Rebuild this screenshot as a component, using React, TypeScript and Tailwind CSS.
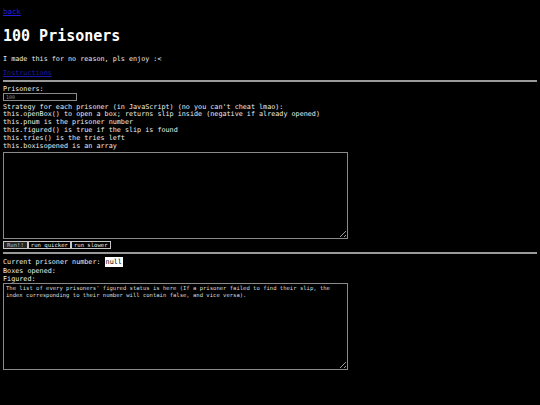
import { useState } from "react";

const strategyLines = [
  "Strategy for each prisoner (in JavaScript) (no you can't cheat lmao):",
  "this.openBox() to open a box; returns slip inside (negative if already opened)",
  "this.pnum is the prisoner number",
  "this.figured() is true if the slip is found",
  "this.tries() is the tries left",
  "this.boxisopened is an array",
];

const App = () => {
  const [code, setCode] = useState("");

  return (
    <div className="min-h-screen bg-black text-[#eeeeee] font-['DejaVu_Sans_Mono',monospace] px-[3px] pt-[8px] text-[6.75px] leading-[8px]">
      <a href="#" className="block w-fit text-[#1f1fdd] underline text-[7.4px] leading-[8px]">
        back
      </a>
      <h1 className="mt-[11px] text-[15px] leading-[18px] font-bold text-white">100 Prisoners</h1>
      <p className="mt-[10px]">I made this for no reason, pls enjoy :&lt;</p>
      <a href="#" className="mt-[6px] block w-fit text-[#1c1cab] underline">
        Instructions
      </a>
      <div className="mt-[3px] h-[2px] bg-[#9a9a9a]" />

      {/* configuración */}
      <div className="mt-[3px]">Prisoners:</div>
      <input
        className="block w-[74px] h-[8px] border border-[#8a8a8a] px-[2px] text-[5px] leading-[6px] placeholder:text-[#8a8a8a] outline-none"
        placeholder="100"
      />
      <div className="mt-[2.5px] leading-[7.9px]">
        {strategyLines.map((l) => (
          <div key={l} className="whitespace-pre">
            {l}
          </div>
        ))}
      </div>
      <textarea
        value={code}
        onChange={(e) => setCode(e.target.value)}
        className="mt-[1.5px] block w-[345px] h-[87px] border border-[#8a8a8a] p-[2px] text-[5.5px] leading-[6.7px] outline-none"
      />
      <div className="mt-[2px] flex">
        <button className="h-[8px] px-[3px] border border-[#c8c8c8] bg-[#262626] text-[#bdbdbd] text-[5.6px] leading-[6px]">
          Run!!
        </button>
        <button className="h-[8px] px-[2px] border border-[#c8c8c8] text-[#eeeeee] text-[5.6px] leading-[6px]">
          run quicker
        </button>
        <button className="h-[8px] px-[2px] border border-[#c8c8c8] text-[#eeeeee] text-[5.6px] leading-[6px]">
          run slower
        </button>
      </div>
      <div className="mt-[3px] h-[2px] bg-[#9a9a9a]" />

      {/* resultados */}
      <div className="mt-[2px] h-[11px] flex items-center whitespace-pre">
        <span>Current prisoner number: </span>
        <span className="inline-block h-[10px] leading-[10px] px-[1px] bg-white text-black">null</span>
      </div>
      <div>Boxes opened:</div>
      <div>Figured:</div>
      <textarea
        readOnly
        className="block w-[345px] h-[87px] border border-[#8a8a8a] px-[2px] py-[1px] text-[5.56px] leading-[6.7px] placeholder:text-[#dddddd] outline-none"
        placeholder="The list of every prisoners' figured status is here (If a prisoner failed to find their slip, the index corresponding to their number will contain false, and vice versa)."
      />
    </div>
  );
};

export default App;
